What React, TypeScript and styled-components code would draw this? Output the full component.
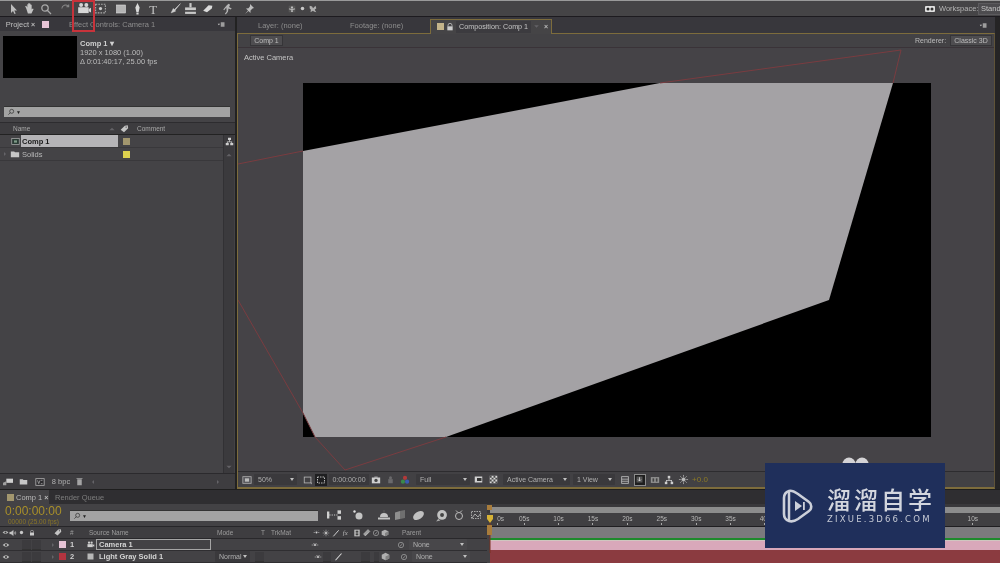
import React from 'react';
import styled, { createGlobalStyle } from 'styled-components';

const Global = createGlobalStyle`
  html, body { margin: 0; padding: 0; background: #242424; }
  * { box-sizing: border-box; }
`;

const Root = styled.div`
  width: 1000px; height: 563px; overflow: hidden; position: relative;
  display: flex; flex-direction: column; background: #252425;
  font-family: "Liberation Sans", Arial, sans-serif; font-size: 7px; color: #b4b4b4;
  filter: blur(0.25px);
`;
const Slot = styled.div<{ $w: number; $align?: string }>`
  flex: none; width: ${p => p.$w}px; height: 100%; display: flex; align-items: center;
  justify-content: ${p => p.$align || 'center'}; white-space: nowrap;
`;
const Toolbar = styled.div`
  height: 17px; flex: none; display: flex; align-items: center; background: #454446;
  border-top: 1px solid #9a9a9a; border-bottom: 1px solid #1d1b1f;
`;
const Spacer = styled.div`flex: 1;`;
const CamHighlight = styled.div`
  position: absolute; left: 72px; top: 0; width: 23px; height: 32px; border: 2px solid #c8333b;
`;
const WorkspaceBtn = styled.div`
  width: 22px; height: 12px; margin-left: 2px; padding-left: 2px; background: #4d4c4f; border: 1px solid #5c5b5e;
  border-right: none; color: #c4c4c4; font-size: 7.5px; line-height: 10px; white-space: nowrap;
`;
const Main = styled.div`height: 472px; flex: none; display: flex;`;
const LeftPanel = styled.div`
  width: 235px; flex: none; display: flex; flex-direction: column; background: #444346;
`;
const Tabs = styled.div<{ $h: number }>`
  height: ${p => p.$h}px; flex: none; display: flex; align-items: center; background: #38373c;
  color: #8d8d8d; font-size: 7.5px;
`;
const ActiveLabel = styled.span`color: #c0c0c0;`;
const Swatch = styled.div<{ $c: string; $s?: number }>`
  width: ${p => p.$s || 7}px; height: ${p => p.$s || 7}px; background: ${p => p.$c}; flex: none;
`;
const Close = styled.span`color: #bbb; font-size: 7px; font-weight: bold;`;
const Info = styled.div`
  height: 75px; flex: none; display: flex; gap: 3px; padding: 5px 0 0 3px; background: #444346;
`;
const Thumb = styled.div`width: 74px; height: 42px; background: #000;`;
const InfoText = styled.div`
  display: flex; flex-direction: column; font-size: 7.5px; line-height: 9px; color: #bcbcbc; padding-top: 3px;
`;
const InfoTitle = styled.span`font-weight: bold; color: #d0d0d0;`;
const SearchField = styled.div<{ $w: number; $ml: number }>`
  width: ${p => p.$w}px; margin-left: ${p => p.$ml}px; height: 11px; background: #a3a3a3; flex: none;
  border-top: 1px solid #333; display: flex; align-items: center; padding-left: 3px; color: #222; gap: 1px;
  font-size: 5px;
`;
const ListHeader = styled.div`
  margin-top: 5px; height: 13px; flex: none; display: flex; align-items: center; background: #3d3c3f;
  border-top: 1px solid #2d2c2f; border-bottom: 1px solid #222; color: #a8a8a8; font-size: 6.5px;
`;
const ListBody = styled.div`flex: 1; display: flex; min-height: 0;`;
const ListRows = styled.div`flex: 1; display: flex; flex-direction: column;`;
const ListRow = styled.div`
  height: 13px; flex: none; display: flex; align-items: center; border-bottom: 1px solid #39383b;
  font-size: 7.5px; color: #c0c0c0;
`;
const NameCell = styled.div<{ $sel?: boolean }>`
  width: 97px; height: 12px; flex: none; display: flex; align-items: center; padding-left: 1px;
  background: ${p => (p.$sel ? '#b5b4b7' : 'transparent')};
  color: ${p => (p.$sel ? '#1a1a1a' : '#b8b8b8')}; font-weight: ${p => (p.$sel ? 'bold' : 'normal')};
`;
const Scrollbar = styled.div`
  width: 11px; margin-right: 1px; flex: none; display: flex; flex-direction: column; align-items: center;
  background: #3b3a3d; border-left: 1px solid #323134;
`;
const ScrollSpace = styled.div`flex: 1;`;
const ScrollCell = styled.div`height: 13px; display: flex; align-items: center; justify-content: center; flex: none;`;
const PanelFooter = styled.div`
  height: 16px; flex: none; display: flex; align-items: center; background: #3e3d40;
  border-top: 1px solid #2b2a2d; color: #b0b0b0; font-size: 7.5px;
`;
const Divider = styled.div`width: 2px; flex: none; background: #222;`;
const RightPanel = styled.div`
  flex: 1; display: flex; flex-direction: column; margin-right: 5px; min-width: 0;
`;
const CompTab = styled.div`
  width: 122px; height: 15px; flex: none; display: flex; align-items: center; background: #454446;
  border: 1px solid #7d6c3c; border-bottom: none; color: #c4c4c4; font-size: 7.5px; position: relative; top: 1px;
`;
const CompTabLabel = styled.div`
  height: 12px; width: 75px; flex: none; display: flex; align-items: center; padding-left: 3px; background: #3c3b3f;
  white-space: nowrap; font-size: 7.2px;
`;
const CompBody = styled.div`
  flex: 1; display: flex; flex-direction: column; border: 1px solid #7d6c3c; border-bottom-width: 2px;
  border-right-color: #5f5338; min-height: 0; background: #454347;
`;
const CompBar = styled.div`
  height: 14px; flex: none; display: flex; align-items: center; background: #434245;
  border-bottom: 1px solid #3a3338; font-size: 7px; color: #bcbcbc;
`;
const BarBtn = styled.div<{ $w: number }>`
  width: ${p => p.$w}px; height: 11px; flex: none; display: flex; align-items: center; justify-content: center;
  background: #4e4d50; border: 1px solid #363538; color: #bdbdbd; font-size: 7px;
`;
const Viewer = styled.div`flex: 1; position: relative; min-height: 0; background: #454347;`;
const ViewerSvg = styled.svg`display: block; width: 100%; height: 100%;`;
const ViewerLabel = styled.div`
  position: absolute; left: 6px; top: 5px; font-size: 7.5px; color: #c4c4c4;
`;
const ViewerFooter = styled.div`
  height: 16px; flex: none; display: flex; align-items: center; background: #424144;
  border-top: 1px solid #2d2c2f; font-size: 7px; color: #a6a6a6;
`;
const Dropdown = styled.div<{ $w: number; $dark?: boolean }>`
  width: ${p => p.$w}px; height: 11px; flex: none; display: flex; align-items: center; justify-content: space-between;
  padding: 0 3px 0 4px; background: ${p => (p.$dark ? '#48474a' : '#3a393c')}; color: #b0b0b0; font-size: 7px;
  border-radius: 1px;
  &::after { content: ''; border-top: 3px solid #c0c0c0; border-left: 2.5px solid transparent; border-right: 2.5px solid transparent; }
`;
const Timecode = styled.div`
  width: 40px; height: 11px; flex: none; background: #3a393c; color: #adadad; font-size: 7px;
  display: flex; align-items: center; justify-content: center;
`;
const Boxed = styled.div`
  width: 12px; height: 12px; display: flex; align-items: center; justify-content: center;
  background: #1e1e1e; border: 1px solid #8c8c8c;
`;
const Exposure = styled.span`color: #8d7a25; font-size: 8px;`;
const Timeline = styled.div`
  height: 74px; flex: none; display: flex; flex-direction: column; background: #434245; margin-top: 0;
`;
const TimeTabs = styled.div`
  height: 15px; flex: none; display: flex; align-items: center; background: #2f2e31; border-top: 1px solid #1e1e1e;
  font-size: 7.5px; color: #7e7e7e;
`;
const TimeTabActive = styled.div`
  height: 100%; width: 49px; flex: none; display: flex; align-items: center; padding-left: 7px; gap: 2px;
  background: #434245; color: #b8b8b8;
`;
const TimeBody = styled.div`flex: 1; display: flex; min-height: 0;`;
const TimeLeft = styled.div`width: 487px; flex: none; display: flex; flex-direction: column;`;
const Controls = styled.div`
  height: 23px; flex: none; display: flex; align-items: center; border-bottom: 1px solid #272629;
`;
const TimeBlock = styled.div`
  width: 70px; flex: none; height: 100%; display: flex; flex-direction: column; padding: 1px 0 0 5px;
`;
const BigTime = styled.div`color: #a88f2a; font-size: 12px; line-height: 13px; letter-spacing: 0;`;
const SmallTime = styled.div`color: #8a7626; font-size: 6.500px; line-height: 7px; padding-left: 3px;`;
const ColHeader = styled.div`
  height: 12px; flex: none; display: flex; align-items: center; background: #3e3d40; border-bottom: 1px solid #29282b;
  font-size: 6.5px; color: #9c9c9c;
`;
const LayerRow = styled.div`
  height: 12px; flex: none; display: flex; align-items: center; border-bottom: 1px solid #2f2e31;
  font-size: 7.5px; color: #d0d0d0; background: #434245;
`;
const LayerName = styled.div<{ $boxed?: boolean }>`
  width: 115px; height: 11px; flex: none; padding-left: 2px; display: flex; align-items: center; font-weight: bold;
  color: #d4d4d4; border: 1px solid ${p => (p.$boxed ? '#a5a5a5' : 'transparent')}; font-size: 7.5px;
`;
const Num = styled.b`font-size: 7.5px; color: #d0d0d0;`;
const SwitchBox = styled.div<{ $w?: number }>`
  width: ${p => p.$w || 9}px; height: 10px; flex: none; background: #3c3b3e; margin-right: 1px; border-bottom: 1px solid #333;
`;
const TimeRight = styled.div`flex: 1; display: flex; flex-direction: column; position: relative; min-width: 0;`;
const WorkArea = styled.div`
  height: 9px; flex: none; padding-top: 3px; padding-left: 3px; background: #39383b;
  &::after { content: ''; display: block; height: 6px; background: #8c8c8c; }
`;
const Ruler = styled.div`
  height: 14px; flex: none; display: flex; background: #403f42; border-bottom: 1px solid #1f1e21; font-size: 6.5px; color: #b8b8b8;
`;
const Tick = styled.div<{ $w: number; $pr?: number }>`
  flex: none; width: ${p => p.$w}px; display: flex; flex-direction: column; align-items: center; padding-top: 2px; line-height: 8px;
  padding-right: ${p => p.$pr || 0}px;
  &::after { content: ''; width: 1px; height: 2px; background: #aaa; }
`;
const Track = styled.div<{ $h: number; $c: string }>`
  height: ${p => p.$h}px; flex: none; margin-left: 3px; background: ${p => p.$c};
`;
const GreenLine = styled.div`height: 2px; flex: none; margin-left: 3px; background: #1d8a2c;`;
const PaleLine = styled.div`height: 1px; flex: none; margin-left: 3px; background: #cfc6bf;`;
const Playhead = styled.svg`position: absolute; left: 0px; top: 0; width: 8px; height: 50px;`;
const Watermark = styled.div`
  position: absolute; left: 765px; top: 463px; width: 180px; height: 85px; background: #1f2f5b;
  display: flex; align-items: center; padding-left: 15px; gap: 12px;
`;
const WmText = styled.div`display: flex; flex-direction: column; color: #d3d6de; gap: 2px;`;
const WmCn = styled.div`
  font-family: "Noto Sans CJK SC", sans-serif; font-weight: 500; font-size: 24px; letter-spacing: 3px; line-height: 26px;
`;
const WmEn = styled.div`letter-spacing: 2.2px; line-height: 11px; color: #c5c9d4; font-family: "DejaVu Sans", sans-serif; font-size: 8.5px;`;
const Blobs = styled.svg`position: absolute; left: 841px; top: 457px; width: 30px; height: 7px;`;

type IconName =
  | 'arrow' | 'hand' | 'zoom' | 'rotate' | 'camera' | 'pan' | 'rect' | 'pen' | 'type' | 'brush' | 'stamp'
  | 'eraser' | 'roto' | 'pin' | 'axis' | 'dot' | 'world' | 'snap' | 'menu' | 'comp' | 'folder' | 'tag'
  | 'tree' | 'up' | 'down' | 'left' | 'right' | 'lens' | 'lock' | 'eye' | 'audio' | 'solo' | 'trash' | 'bpc'
  | 'interpret' | 'grid' | 'frame' | 'mask' | 'snapshot' | 'person' | 'rgb' | 'checker' | 'region' | 'layout'
  | 'flow' | 'fast' | 'box3d' | 'switchA' | 'line' | 'sun' | 'fx' | 'film' | 'pick' | 'cube' | 'spiral'
  | 'miniflow' | 'ball' | 'bubble' | 'clock' | 'graph' | 'mound' | 'cards' | 'motion' | 'sq' | 'camsmall';

const paths: Record<IconName, React.ReactNode> = {
  arrow: <path d="M4 1v9l2-2 1.5 3 1.2-.6L7.3 7.6 10 7.4z" fill="#bdbdbd" />,
  hand: <path d="M3 6l-1-2 1-.5 1 1.5V2h1v3-4h1v4-3.5h1V5 2.500h1V7l1-1 .8.5-2 4H4.500z" fill="#c4c4c4" />,
  zoom: <g fill="none" stroke="#a8a8a8" strokeWidth="1.3"><circle cx="5" cy="5" r="3.200" /><path d="M7.500 7.500L11 11" /></g>,
  rotate: <path d="M2 6a4 4 0 0 1 7-2.500M9.500 1.500v2.500H7" fill="none" stroke="#888" strokeWidth="1.100" />,
  camera: <g fill="#d6d6d6"><circle cx="3.500" cy="2.500" r="1.700" /><circle cx="8" cy="2.500" r="1.700" /><rect x="1" y="4.500" width="9" height="5" /><path d="M10 6l2-1v4l-2-1z" /></g>,
  pan: <g fill="none" stroke="#aaa" strokeDasharray="1.500 1"><rect x="1.500" y="2" width="9" height="8" /><circle cx="6" cy="6" r="1.500" fill="#ccc" stroke="none" /></g>,
  rect: <rect x="1.500" y="2" width="9" height="8" fill="#b4b4b4" stroke="#ddd" strokeWidth=".6" />,
  pen: <path d="M6 1l2 4-1 4.500H5L4 5zM5 10h2v1.500H5z" fill="#d8d8d8" />,
  type: <text x="2" y="10.500" fontSize="11" fontFamily="Liberation Serif, serif" fill="#c4c4c4">T</text>,
  brush: <path d="M10.500 1.500L5 7 4 6 2 10l4-1.500-.4-1z" fill="#d0d0d0" stroke="#d0d0d0" strokeWidth=".5" />,
  stamp: <g fill="#c8c8c8"><rect x="5" y="1" width="2" height="4" /><rect x="1" y="5" width="10" height="2.500" /><rect x="1" y="9" width="10" height="2" /></g>,
  eraser: <path d="M2 8l5-5 3.500 .5L10 6 5.500 9.500z" fill="#dadada" />,
  roto: <path d="M6 1.500l1.500 1-1 2 2.500 1.500-1 1-2-1-.5 3-2 2.500-.8-.6 1.600-2.400L4 5 2 7.500l-.8-.5 2.800-3.500z" fill="#b4b4b4" />,
  pin: <path d="M7 1l4 4-1.500.5-2 2L7.500 10 5.500 8 2 11l3-3.500L3 5.500l2.500-.2 1.500-2z" fill="#bdbdbd" />,
  axis: <g fill="#d8d8d8"><rect x="2" y="2" width="8" height="8" fill="#555" /><path d="M6 2.500l1.500 2h-1V6H8v-1l2 1-2 1v-.5H6.500V8h1L6 10 4.500 8h1V6.500H4V7L2 6l2-1v1h1.500V4.500h-1z" /></g>,
  dot: <circle cx="6" cy="6" r="3" fill="#c9c9c9" />,
  world: <path d="M2 2l3 1 1 2 3-3 1 3-2 2 2 3-3-1-1-1-3 2 .5-3L2 5z" fill="#b0b0b0" />,
  snap: <g><rect x="1" y="3" width="10" height="6" rx="1" fill="#e0e0e0" /><circle cx="4" cy="6" r="1.500" fill="#222" /><circle cx="8" cy="6" r="1.500" fill="#333" /></g>,
  menu: <g fill="#cfcfcf"><path d="M1 5l3 0-1.500 2z" /><rect x="5" y="3" width="5" height="6" fill="#9d9d9d" /></g>,
  comp: <g><rect x="1" y="2" width="10" height="8" fill="#2a3a34" stroke="#aaa" /><rect x="4" y="4.500" width="4" height="3" fill="#7f9c88" /></g>,
  folder: <path d="M1 3h4l1 1h5v6H1z" fill="#c6c6c6" />,
  tag: <path d="M2 7l5-5 3.500-.5L11 5 6 10zM8.500 3a.7.7 0 1 0 .1 0z" fill="#c4c4c4" />,
  tree: <g fill="#cfcfcf"><rect x="4" y="1" width="4" height="3" /><rect x="1" y="8" width="4" height="3" /><rect x="7" y="8" width="4" height="3" /><path d="M5.500 4h1v2H9.500v2h-1V7h-5v1h-1V6h3z" /></g>,
  up: <path d="M6 4l4 4H2z" fill="#636266" />,
  down: <path d="M6 8L2 4h8z" fill="#636266" />,
  left: <path d="M4 6l4-4v8z" fill="#656468" />,
  right: <path d="M8 6L4 2v8z" fill="#656468" />,
  lens: <g fill="none" stroke="#2a2a2a" strokeWidth="1"><circle cx="7" cy="5" r="3" /><path d="M5 7l-3 3" /></g>,
  lock: <g><path d="M3 5V3.500a3 3 0 0 1 6 0V5" fill="none" stroke="#ccc" strokeWidth="1.100" /><rect x="2" y="5" width="8" height="6" fill="#ccc" /></g>,
  eye: <g><path d="M1 6q5-5 10 0-5 5-10 0z" fill="#bbb" /><circle cx="6" cy="6" r="1.600" fill="#3a3a3a" /></g>,
  audio: <path d="M1 4.500h2L6.500 2v8L3 7.500H1zM8 4q1.500 2 0 4M9.500 3q2 3 0 6" fill="#c4c4c4" stroke="#c4c4c4" strokeWidth=".4" />,
  solo: <circle cx="6" cy="6" r="2.800" fill="#c8c8c8" />,
  trash: <g fill="#a4a4a4"><rect x="3" y="3" width="6" height="8" /><rect x="2" y="1.500" width="8" height="1" /></g>,
  bpc: <g><rect x="1" y="2" width="10" height="8" fill="#2d2c2f" stroke="#b0b0b0" /><path d="M3 4l1.500 4L6 4M7 4h2M7 8h2" stroke="#bbb" fill="none" strokeWidth=".8" /></g>,
  interpret: <g><rect x="4" y="2" width="8" height="5" fill="#cfcfcf" /><path d="M0 7l4-2v5H0z" fill="#9f9f9f" /></g>,
  grid: <g><rect x="1" y="2" width="10" height="8" fill="#56555a" stroke="#aaa" /><rect x="3.500" y="4" width="5" height="4" fill="#bbb" /></g>,
  frame: <g fill="none" stroke="#b4b4b4"><rect x="1.500" y="2.500" width="8" height="7" /><path d="M10 9v2" /></g>,
  mask: <g><rect x="0" y="0" width="12" height="12" fill="#1f1f21" /><rect x="2.500" y="3" width="7" height="6" fill="none" stroke="#bbb" strokeDasharray="1.500 1" /></g>,
  snapshot: <g fill="#cfcfcf"><rect x="1" y="3" width="10" height="7" /><rect x="4" y="2" width="4" height="1" /><circle cx="6" cy="6.500" r="2" fill="#444" /></g>,
  person: <g fill="#6a696c"><circle cx="6" cy="3.500" r="2" /><rect x="3" y="5.500" width="6" height="5.500" /></g>,
  rgb: <g><circle cx="6" cy="3.500" r="2.500" fill="#b23a3a" /><circle cx="3.500" cy="8" r="2.500" fill="#3a8a4a" /><circle cx="8.500" cy="8" r="2.500" fill="#3a5ab0" /></g>,
  checker: <g><rect x="1" y="1" width="10" height="10" fill="#d8d8d8" /><path d="M1 1h2.500v2.500H1zM6 1h2.500v2.500H6zM3.500 3.500H6V6H3.500zM8.500 3.500H11V6H8.500zM1 6h2.500v2.500H1zM6 6h2.500v2.500H6zM3.500 8.500H6V11H3.500zM8.500 8.500H11V11H8.500z" fill="#4a4a4a" /></g>,
  region: <g><rect x="1" y="2" width="10" height="8" fill="#d0d0d0" /><rect x="4" y="4" width="6" height="4" fill="#333" /></g>,
  layout: <g fill="none" stroke="#bcbcbc"><rect x="2" y="2" width="8" height="8" /><path d="M2 5h8M2 7.500h8" /></g>,
  flow: <g><rect x="2" y="2" width="8" height="8" fill="#555" /><path d="M6 3v5M4 6l2 2 2-2" stroke="#ddd" fill="none" /></g>,
  fast: <g><rect x="1" y="2.500" width="10" height="7" fill="#909090" /><rect x="3" y="4" width="2" height="4" fill="#444" /><rect x="7" y="4" width="2" height="4" fill="#444" /></g>,
  box3d: <g fill="#cfcfcf"><rect x="4.500" y="1" width="3" height="3" /><rect x="1" y="8" width="3" height="3" /><rect x="8" y="8" width="3" height="3" /><path d="M5.500 4h1v2h3v2h-1V7h-5v1h-1V6h3z" /></g>,
  switchA: <g fill="#d4d4d4"><circle cx="6" cy="6" r="1.500" /><path d="M1 6h3M8 6h3M6 3v1.500" stroke="#d4d4d4" strokeWidth=".8" /><path d="M3 3l1 1M9 3L8 4" stroke="#d4d4d4" strokeWidth=".8" /></g>,
  line: <path d="M2 11L10 2" stroke="#dadada" strokeWidth="1.400" />,
  sun: <g stroke="#bbb" strokeWidth=".8" fill="#bbb"><circle cx="6" cy="6" r="1.800" /><path d="M6 1v2M6 9v2M1 6h2M9 6h2M2.500 2.500l1.500 1.500M8 8l1.500 1.500M9.500 2.500L8 4M4 8L2.500 9.500" /></g>,
  fx: <text x="1" y="9.500" fontSize="9" fontStyle="italic" fontFamily="Liberation Serif, serif" fill="#bbb">fx</text>,
  film: <g><rect x="2" y="1" width="8" height="10" fill="#c4c4c4" /><rect x="4" y="2.500" width="4" height="3" fill="#444" /><rect x="4" y="6.500" width="4" height="3" fill="#444" /></g>,
  pick: <path d="M2 8l6-6 2.500 2.500-6 6zM4 10l4-4" fill="#9c9c9c" stroke="#cfcfcf" strokeWidth=".6" />,
  cube: <g><path d="M6 1l5 2.500v5L6 11 1 8.500v-5z" fill="#b0b0b0" /><path d="M6 6l5-2.500v5L6 11z" fill="#828282" /></g>,
  spiral: <g fill="none" stroke="#a8a8a8" strokeWidth="1"><circle cx="6" cy="6" r="4" /><path d="M4.500 7.500c2-.5 2.500-2 3-3.500" /></g>,
  miniflow: <g fill="#d0d0d0"><rect x="0" y="3" width="2" height="6" /><rect x="9" y="2" width="3" height="3" /><rect x="9" y="7" width="3" height="3" /><path d="M2 6h7" stroke="#d0d0d0" strokeDasharray="1 1" /></g>,
  ball: <g><circle cx="7" cy="7" r="3.500" fill="#c4c4c4" /><circle cx="2.500" cy="2.500" r="1.200" fill="#e0e0e0" /></g>,
  bubble: <g><circle cx="6.500" cy="5.500" r="4.500" fill="#c2c2c2" /><circle cx="6.500" cy="5.500" r="1.800" fill="#444" /><path d="M3 9l-2 2.500 4-1z" fill="#aaa" /></g>,
  clock: <g fill="none" stroke="#bcbcbc" strokeWidth="1"><circle cx="6" cy="7" r="3.500" /><path d="M3 1.500l2 2M9 1.500l-2 2" /></g>,
  graph: <g fill="none" stroke="#a8a8a8"><rect x="1.500" y="2.500" width="9" height="7" strokeDasharray="1.500 1" /><path d="M2 9l3-4 3 3 3-4" /></g>,
  mound: <g fill="#c4c4c4"><path d="M2 8a4 4 0 0 1 8 0z" /><rect x="0" y="8.500" width="12" height="2" /><rect x="5.400" y="1" width="1.200" height="3" fill="#555" /></g>,
  cards: <g><path d="M1 3.500l5-1.500v8l-5 1z" fill="#8e8e8e" /><path d="M6 2l5-1v8l-5 1z" fill="#6f6f6f" /></g>,
  motion: <g><ellipse cx="6" cy="6" rx="5.500" ry="3.500" transform="rotate(-35 6 6)" fill="#c0c0c0" /></g>,
  sq: <rect x="2" y="2" width="8" height="8" fill="#b8b8b8" />,
  camsmall: <g fill="#cfcfcf"><circle cx="4" cy="3.500" r="1.500" /><circle cx="7.500" cy="3.500" r="1.500" /><rect x="2" y="5.500" width="7" height="4" /><path d="M9 6.500l2-1v3.500l-2-1z" /></g>,
};

const Icon = ({ n, s = 10 }: { n: IconName; s?: number }) => (
  <svg width={s} height={s} viewBox="0 0 12 12" style={{ display: 'block', flex: 'none' }}>{paths[n]}</svg>
);
const Sl = ({ w, n, s, a }: { w: number; n?: IconName; s?: number; a?: string }) => (
  <Slot $w={w} $align={a}>{n ? <Icon n={n} s={s} /> : null}</Slot>
);

const TOOLS: [number, IconName?, number?][] = [
  [7], [12, 'arrow', 12], [20, 'hand', 13], [14, 'zoom', 12], [24, 'rotate', 11], [14, 'camera', 14], [18, 'pan', 13],
  [24, 'rect', 12], [8, 'pen', 13], [26, 'type', 14], [16, 'brush', 13], [14, 'stamp', 13], [20, 'eraser', 13],
  [22, 'roto', 13], [20, 'pin', 12], [28], [10, 'axis', 10], [10, 'dot', 7], [12, 'world', 10],
];

const TICKS = ['05s', '10s', '15s', '20s', '25s', '30s', '35s', '40s'];

export default function App() {
  return (
    <Root>
      <Global />
      <Toolbar>
        {TOOLS.map(([w, n, s], i) => <Sl key={i} w={w} n={n} s={s} />)}
        <Spacer />
        <Sl w={14} n="snap" s={12} />
        <Slot $w={39} $align="flex-start">&nbsp;<span style={{ fontSize: 7.5 }}>Workspace:</span></Slot>
        <WorkspaceBtn>Stand</WorkspaceBtn>
      </Toolbar>
      <Main>
        <LeftPanel>
          <Tabs $h={14}>
            <Slot $w={29} $align="flex-end"><ActiveLabel>Project</ActiveLabel></Slot>
            <Slot $w={8}><Close>×</Close></Slot>
            <Slot $w={17}><Swatch $c="#e6c3d5" /></Slot>
            <Slot $w={15} />
            <Slot $w={90} $align="flex-start">Effect Controls: Camera 1</Slot>
            <Slot $w={57} />
            <Sl w={10} n="menu" s={9} />
          </Tabs>
          <Info>
            <Thumb />
            <InfoText>
              <InfoTitle>Comp 1 ▾</InfoTitle>
              <span>1920 x 1080 (1.00)</span>
              <span>Δ 0:01:40:17, 25.00 fps</span>
            </InfoText>
          </Info>
          <SearchField $w={226} $ml={4}><Icon n="lens" s={8} />▼</SearchField>
          <ListHeader>
            <Slot $w={13} />
            <Slot $w={95} $align="flex-start">Name</Slot>
            <Slot $w={10} $align="flex-start"><Icon n="up" s={8} /></Slot>
            <Sl w={12} n="tag" s={10} />
            <Slot $w={7} />
            <Slot $w={40} $align="flex-start">Comment</Slot>
          </ListHeader>
          <ListBody>
            <ListRows>
              <ListRow>
                <Sl w={9} />
                <Sl w={12} n="comp" s={9} />
                <NameCell $sel>Comp 1</NameCell>
                <Slot $w={16}><Swatch $c="#a2966e" /></Slot>
              </ListRow>
              <ListRow>
                <Sl w={9} n="right" s={6} />
                <Sl w={12} n="folder" s={10} />
                <NameCell>Solids</NameCell>
                <Slot $w={16}><Swatch $c="#dcd04e" /></Slot>
              </ListRow>
            </ListRows>
            <Scrollbar>
              <ScrollCell><Icon n="tree" s={9} /></ScrollCell>
              <ScrollCell><Icon n="up" s={8} /></ScrollCell>
              <ScrollSpace />
              <ScrollCell><Icon n="down" s={8} /></ScrollCell>
            </Scrollbar>
          </ListBody>
          <PanelFooter>
            <Sl w={15} n="interpret" s={10} />
            <Sl w={16} n="folder" s={9} />
            <Sl w={18} n="bpc" s={10} />
            <Slot $w={24}>8 bpc</Slot>
            <Sl w={12} n="trash" s={9} />
            <Sl w={16} n="left" s={6} />
            <Slot $w={112} />
            <Sl w={10} n="right" s={6} />
          </PanelFooter>
        </LeftPanel>
        <Divider />
        <RightPanel>
          <Tabs $h={16}>
            <Slot $w={21} />
            <Slot $w={92} $align="flex-start">Layer: (none)</Slot>
            <Slot $w={80} $align="flex-start">Footage: (none)</Slot>
            <CompTab>
              <Slot $w={6} />
              <Swatch $c="#c4b48a" />
              <Slot $w={12}><Icon n="lock" s={8} /></Slot>
              <CompTabLabel>Composition: Comp 1</CompTabLabel>
              <Slot $w={11}><Icon n="down" s={7} /></Slot>
              <Slot $w={8}><Close>×</Close></Slot>
            </CompTab>
            <Spacer />
            <Sl w={14} n="menu" s={9} />
            <Slot $w={5} />
          </Tabs>
          <CompBody>
            <CompBar>
              <Slot $w={12} />
              <BarBtn $w={33}>Comp 1</BarBtn>
              <Spacer />
              <Slot $w={35} $align="flex-start">Renderer:</Slot>
              <BarBtn $w={42}>Classic 3D</BarBtn>
              <Slot $w={2} />
            </CompBar>
            <Viewer>
              <ViewerSvg viewBox="238 48 756 423" preserveAspectRatio="none">
                <rect x="303" y="83" width="628" height="354" fill="#000" />
                <polygon points="303,151 660,83 893,83 829,300 446,437 315,437 303,413" fill="#a4a2a5" />
                <g fill="none" stroke="#7a3c40" strokeWidth="1">
                  <path d="M238 164L303 151" />
                  <path d="M660 83L901 50 893 83" />
                  <path d="M238 300L303 413 315 437 345 470" />
                  <path d="M345 470L446 437" />
                </g>
              </ViewerSvg>
              <ViewerLabel>Active Camera</ViewerLabel>
            </Viewer>
            <ViewerFooter>
              <Slot $w={3} />
              <Sl w={12} n="grid" s={10} />
              <Slot $w={1} />
              <Dropdown $w={43}>50%</Dropdown>
              <Slot $w={3} />
              <Sl w={15} n="frame" s={10} />
              <Sl w={12} n="mask" s={12} />
              <Slot $w={2} />
              <Timecode>0:00:00:00</Timecode>
              <Sl w={14} n="snapshot" s={10} />
              <Sl w={14} n="person" s={9} />
              <Sl w={16} n="rgb" s={10} />
              <Slot $w={3} />
              <Dropdown $w={54}>Full</Dropdown>
              <Slot $w={1} />
              <Sl w={15} n="region" s={9} />
              <Sl w={15} n="checker" s={9} />
              <Slot $w={2} />
              <Dropdown $w={67}>Active Camera</Dropdown>
              <Slot $w={3} />
              <Dropdown $w={42}>1 View</Dropdown>
              <Slot $w={2} />
              <Sl w={15} n="layout" s={10} />
              <Slot $w={15}><Boxed><Icon n="flow" s={9} /></Boxed></Slot>
              <Sl w={15} n="fast" s={10} />
              <Sl w={14} n="box3d" s={10} />
              <Sl w={15} n="sun" s={11} />
              <Slot $w={18}><Exposure>+0.0</Exposure></Slot>
            </ViewerFooter>
          </CompBody>
        </RightPanel>
      </Main>
      <Timeline>
        <TimeTabs>
          <TimeTabActive><Swatch $c="#a2966e" />Comp 1 <Close>×</Close></TimeTabActive>
          <Slot $w={6} />
          <span>Render Queue</span>
        </TimeTabs>
        <TimeBody>
          <TimeLeft>
            <Controls>
              <TimeBlock>
                <BigTime>0:00:00:00</BigTime>
                <SmallTime>00000 (25.00 fps)</SmallTime>
              </TimeBlock>
              <SearchField $w={248} $ml={0}><Icon n="lens" s={8} />▼</SearchField>
              <Slot $w={7} />
              <Sl w={17} n="miniflow" s={14} />
              <Slot $w={7} />
              <Sl w={17} n="ball" s={12} />
              <Slot $w={10} />
              <Sl w={16} n="mound" s={12} />
              <Sl w={16} n="cards" s={12} />
              <Sl w={20} n="motion" s={13} />
              <Slot $w={3} />
              <Sl w={20} n="bubble" s={13} />
              <Sl w={15} n="clock" s={12} />
              <Sl w={20} n="graph" s={12} />
            </Controls>
            <ColHeader>
              <Sl w={10} n="eye" s={7} />
              <Sl w={6} n="audio" s={8} />
              <Sl w={11} n="solo" s={7} />
              <Sl w={9} n="lock" s={6} />
              <Slot $w={15} />
              <Sl w={12} n="tag" s={9} />
              <Slot $w={7} />
              <Slot $w={19} $align="flex-start">#</Slot>
              <Slot $w={128} $align="flex-start">Source Name</Slot>
              <Slot $w={44} $align="flex-start">Mode</Slot>
              <Slot $w={10} $align="flex-start">T</Slot>
              <Slot $w={40} $align="flex-start">TrkMat</Slot>
              <Sl w={10} n="switchA" s={7} />
              <Sl w={10} n="sun" s={8} />
              <Sl w={10} n="line" s={8} />
              <Sl w={11} n="fx" s={9} />
              <Sl w={10} n="film" s={8} />
              <Sl w={9} n="pick" s={9} />
              <Sl w={9} n="spiral" s={8} />
              <Sl w={10} n="cube" s={8} />
              <Slot $w={12} />
              <Slot $w={30} $align="flex-start">Parent</Slot>
            </ColHeader>
            <LayerRow>
              <Sl w={12} n="eye" s={8} />
              <Slot $w={10} />
              <SwitchBox /><SwitchBox />
              <Slot $w={6} />
              <Sl w={10} n="right" s={6} />
              <Slot $w={9}><Swatch $c="#e6c3d5" /></Slot>
              <Slot $w={3} />
              <Slot $w={15} $align="flex-start"><Num>1</Num></Slot>
              <Sl w={11} n="camsmall" s={9} />
              <LayerName $boxed>Camera 1</LayerName>
              <Slot $w={99} />
              <Sl w={10} n="switchA" s={8} />
              <Slot $w={75} />
              <Sl w={12} n="spiral" s={8} />
              <Slot $w={2} />
              <Dropdown $w={58} $dark>None</Dropdown>
            </LayerRow>
            <LayerRow>
              <Sl w={12} n="eye" s={8} />
              <Slot $w={10} />
              <SwitchBox /><SwitchBox />
              <Slot $w={6} />
              <Sl w={10} n="right" s={6} />
              <Slot $w={9}><Swatch $c="#b3343f" /></Slot>
              <Slot $w={3} />
              <Slot $w={15} $align="flex-start"><Num>2</Num></Slot>
              <Sl w={11} n="sq" s={9} />
              <LayerName>Light Gray Solid 1</LayerName>
              <Slot $w={4} />
              <Dropdown $w={35}>Normal</Dropdown>
              <Slot $w={5} />
              <SwitchBox />
              <Slot $w={48} />
              <Sl w={10} n="switchA" s={8} />
              <SwitchBox $w={8} />
              <Sl w={12} n="line" s={9} />
              <Slot $w={17} />
              <SwitchBox /><Slot $w={3} /><SwitchBox $w={5} />
              <Sl w={10} n="cube" s={9} />
              <Slot $w={8} />
              <Sl w={12} n="spiral" s={8} />
              <Slot $w={2} />
              <Dropdown $w={58} $dark>None</Dropdown>
            </LayerRow>
          </TimeLeft>
          <TimeRight>
            <WorkArea />
            <Ruler>
              <Tick $w={20} $pr={0}>&nbsp;&nbsp;&nbsp;&nbsp;0s</Tick>
              {TICKS.map(t => <Tick key={t} $w={34.4}>{t}</Tick>)}
              <Spacer />
              <Tick $w={34.4}>10s</Tick>
              <Slot $w={10} />
            </Ruler>
            <Track $h={11} $c="#7b7a7d" />
            <GreenLine />
            <PaleLine />
            <Track $h={9} $c="#d9a8ba" />
            <Track $h={13} $c="#8b3b40" />
            <Playhead viewBox="0 0 8 50">
              <rect x="0" y="1" width="5" height="5" fill="#a87c3c" />
              <path d="M0 11h6v4l-3 4-3-4z" fill="#d6b236" />
              <rect x="2.500" y="19" width="1" height="30" fill="#7a3020" />
              <rect x="0" y="21" width="5" height="10" fill="#a87c3c" />
            </Playhead>
          </TimeRight>
        </TimeBody>
      </Timeline>
      <CamHighlight />
      <Blobs viewBox="0 0 30 7">
        <circle cx="8" cy="7" r="6.500" fill="#d4d3d6" />
        <circle cx="21" cy="7" r="6.500" fill="#d4d3d6" />
      </Blobs>
      <Watermark>
        <svg width="35" height="36" viewBox="0 0 35 36" style={{ flex: 'none' }}>
          <path d="M9 4v28" stroke="#ccd0da" strokeWidth="2.500" fill="none" strokeLinecap="round" />
          <path d="M9 3C6 4 4 7 4 10v16c0 3 2 6 5 7 3 1 6 0 9-2l11-8c3-2 3-7 0-9L18 6C15 4 12 2 9 3z" fill="none" stroke="#ccd0da" strokeWidth="2.600" />
          <path d="M15 13l7 5-7 5z" fill="#ccd0da" />
          <rect x="23" y="14" width="1.800" height="8" fill="#ccd0da" />
        </svg>
        <WmText>
          <WmCn>溜溜自学</WmCn>
          <WmEn>ZIXUE.3D66.COM</WmEn>
        </WmText>
      </Watermark>
    </Root>
  );
}
